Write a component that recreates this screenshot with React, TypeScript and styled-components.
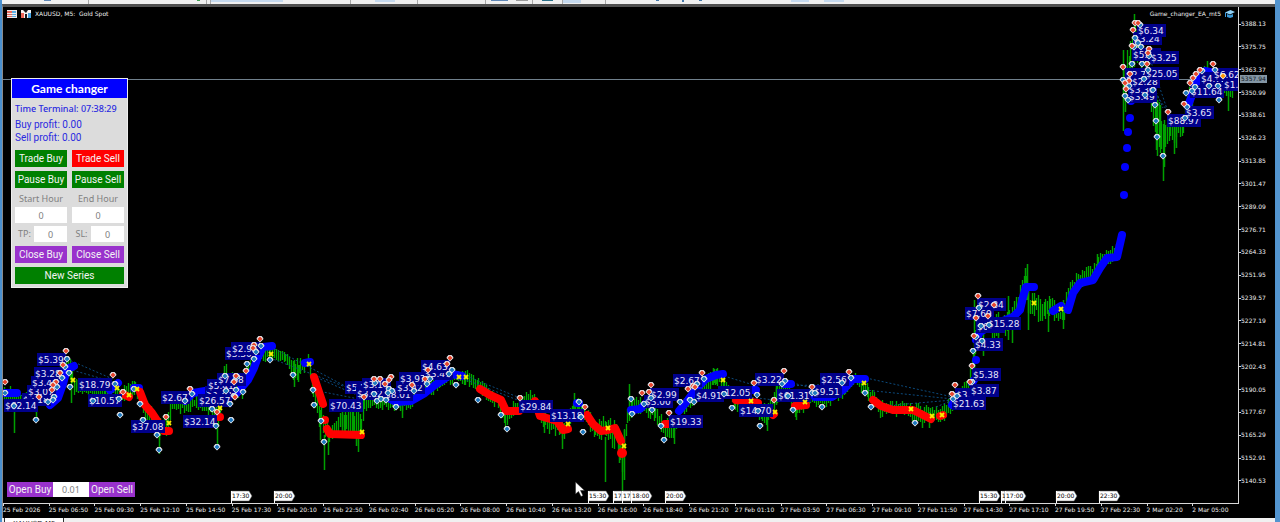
import React from "react";
import styled, { createGlobalStyle } from "styled-components";

const GlobalStyle = createGlobalStyle`
  * { box-sizing: border-box; }
  body { margin: 0; background: #f0f0f0; }
`;

const chartFont = `"DejaVu Sans", sans-serif`;
const labelFont = `"Noto Sans", sans-serif`;
const titleFont = `Lato, "Noto Sans", sans-serif`;
const controlFont = `Roboto, "Liberation Sans", sans-serif`;

const Window = styled.div`
  height: 100vh;
  overflow: hidden;
  display: flex;
  flex-direction: column;
  border-left: 2px solid #4a90cf;
  border-right: 5px solid #5294cf;
  font-family: ${chartFont};
`;

const Toolbar = styled.header`
  height: 4px;
  flex: none;
  overflow: hidden;
  background: #f0f0f0;
  svg { display: block; }
`;

const ChartFrame = styled.main`
  flex: none;
  display: grid;
  grid-template-columns: minmax(0, 1fr) 37px;
  background: #000;
  border-top: 3px solid #505050;
  border-left: 1px solid #8a8a8a;
`;

const Plot = styled.section`
  position: relative;
  border-bottom: 1px solid #d8d8d8;
`;

const ChartSvg = styled.svg`
  display: block;
  width: 100%;
  height: auto;
`;

const Caption = styled.div`
  position: absolute;
  top: 3px;
  left: 4px;
  right: 3px;
  display: flex;
  justify-content: space-between;
  font-size: 6px;
  line-height: 8px;
  color: #f0f0f0;
`;

const CaptionPart = styled.span`
  display: flex;
  align-items: center;
  gap: 4px;
  white-space: pre;
`;

const PriceAxis = styled.ul`
  position: relative;
  margin: 0;
  padding: 13px 0 19px;
  list-style: none;
  display: flex;
  flex-direction: column;
  justify-content: space-between;
  border-left: 1px solid #d8d8d8;
  font-size: 6px;
  line-height: 8px;
  color: #f0f0f0;
`;

const Price = styled.li`
  display: flex;
  align-items: center;
  &::before {
    content: "";
    width: 2px;
    height: 1px;
    background: #d8d8d8;
  }
`;

const CurrentPrice = styled.li`
  position: absolute;
  top: 68px;
  left: 1px;
  padding: 0 1px;
  background: #8496a4;
  color: #10181e;
`;

const TimeAxis = styled.ul`
  margin: 0;
  padding: 0;
  height: 14px;
  list-style: none;
  display: grid;
  grid-template-columns: repeat(27, minmax(0, 1fr));
  font-size: 6px;
  line-height: 8px;
  color: #f0f0f0;
`;

const TimeMark = styled.li`
  white-space: nowrap;
  &::before {
    content: "";
    display: block;
    width: 1px;
    height: 2px;
    background: #d8d8d8;
  }
`;

const Panel = styled.form`
  position: absolute;
  left: 8px;
  top: 71px;
  width: 117px;
  background: #dcdcdc;
  border: 1px solid #eeeeee;
`;

const PanelTitle = styled.h1`
  margin: 0;
  background: #0000ff;
  color: #fff;
  font: 700 12px/19px ${titleFont};
  text-align: center;
`;

const PanelBody = styled.div`
  padding: 4px 3px 3px;
  display: flex;
  flex-direction: column;
  gap: 4px;
`;

const Info = styled.div`
  padding-bottom: 2px;
  color: #2a2ae0;
  font: 10px/13px ${controlFont};
`;

const Clock = styled.div`
  margin-bottom: 2px;
  font: 500 9px/14px ${labelFont};
  white-space: nowrap;
`;

const Pair = styled.div`
  display: grid;
  grid-template-columns: 1fr 1fr;
  gap: 5px;
`;

const colours = { green: "#008000", red: "#ff0000", purple: "#9932cc" };

const ActionButton = styled.button<{ $tone: keyof typeof colours; $flat?: boolean }>`
  height: ${(p) => (p.$flat ? 15 : 17)}px;
  padding: 0;
  border: 0;
  background: ${(p) => colours[p.$tone]};
  color: #f4f4f4;
  font: 10px/15px ${controlFont};
  white-space: nowrap;
`;

const Field = styled.label<{ $inline?: boolean }>`
  display: flex;
  flex-direction: ${(p) => (p.$inline ? "row" : "column")};
  align-items: ${(p) => (p.$inline ? "center" : "stretch")};
  gap: ${(p) => (p.$inline ? 0 : 1)}px;
  color: #808080;
  font: 9px/14px ${labelFont};
  text-align: center;
  > span { flex: 1; }
`;

const HourFields = styled(Pair)`
  margin-bottom: -1px;
`;

const NumberBox = styled.input<{ $width: string; $height?: number }>`
  width: ${(p) => p.$width};
  height: ${(p) => p.$height ?? 16}px;
  padding: 0;
  border: 0;
  background: #fff;
  color: #808080;
  font: 9px/12px ${labelFont};
  text-align: center;
`;

const OrderBar = styled.form`
  position: absolute;
  left: 4px;
  bottom: 6px;
  display: grid;
  grid-template-columns: 46px 36px 46px;
`;

const TabStrip = styled.nav`
  flex: 1;
  padding-left: 2px;
  background: #f0f0f0;
  line-height: 0;
`;

const Tab = styled.a`
  display: inline-block;
  padding: 2px 8px 1px;
  border: 1px solid #303030;
  border-top: 0;
  background: #fff;
  color: #222;
  font-size: 7px;
  line-height: 8px;
  text-decoration: none;
`;

/* ---- chart data ---- */

type Pt = [number, number];
type Range = [number, number, number];

const segments: Range[][] = [
  [
    [4, 388, 398], [14, 390, 412], [30, 392, 404], [44, 388, 404], [60, 364, 384], [70, 354, 378],
    [74, 380, 392], [84, 384, 394], [105, 388, 396], [115, 382, 396], [122, 390, 400], [135, 380, 392],
    [143, 398, 415], [160, 420, 442], [168, 410, 430], [172, 398, 412], [190, 396, 410], [200, 398, 408],
    [218, 402, 425], [226, 366, 396], [240, 378, 402], [255, 350, 364], [270, 346, 358], [285, 354, 360],
    [293, 362, 378], [300, 360, 378], [308, 356, 366], [313, 375, 400], [323, 405, 445], [330, 422, 442],
    [340, 415, 432], [350, 412, 432], [361, 412, 436], [364, 396, 410], [380, 392, 406], [400, 398, 410],
    [410, 396, 408], [425, 380, 396], [440, 374, 388], [450, 368, 382], [465, 372, 382], [478, 380, 390],
    [490, 390, 402], [498, 392, 408], [505, 410, 426], [520, 398, 410], [530, 390, 400], [535, 396, 412],
    [545, 412, 428], [560, 420, 438], [568, 418, 434], [573, 400, 416], [582, 402, 418], [595, 420, 436],
    [606, 418, 440], [616, 420, 448], [622, 440, 470], [627, 410, 430], [632, 400, 412], [640, 398, 412],
    [655, 405, 420], [665, 420, 438], [674, 418, 435], [680, 405, 415], [700, 382, 400], [715, 370, 384],
    [724, 376, 388], [735, 395, 410], [755, 400, 412], [762, 406, 425], [772, 400, 418], [777, 386, 402],
    [785, 378, 388], [795, 402, 418], [810, 392, 404], [830, 392, 404], [845, 382, 394], [855, 374, 382],
    [868, 386, 400], [880, 402, 416], [900, 402, 414], [920, 406, 422], [940, 408, 422], [952, 398, 410],
    [968, 380, 392], [973, 344, 376], [980, 304, 336], [990, 310, 338], [1005, 308, 334], [1012, 308, 326],
    [1020, 285, 312], [1026, 270, 300], [1030, 290, 320], [1045, 302, 318], [1050, 296, 312],
    [1058, 308, 328], [1064, 302, 322], [1070, 280, 300], [1080, 274, 285], [1096, 262, 280],
    [1100, 252, 266], [1110, 252, 262], [1118, 240, 255], [1122, 218, 236],
  ],
  [
    [1123, 62, 100], [1130, 40, 80], [1135, 22, 60], [1145, 50, 80], [1155, 90, 135], [1163, 118, 158],
    [1170, 124, 142], [1183, 118, 136], [1190, 84, 108], [1205, 66, 80], [1220, 78, 92], [1234, 84, 98],
  ],
];

const spikes: Range[] = [
  [14, 392, 433], [36, 405, 420], [71, 370, 403], [76, 380, 392], [159, 436, 454], [217, 424, 448],
  [224, 366, 390], [294, 360, 387], [298, 365, 382], [324, 435, 470], [328, 425, 455], [320, 410, 440],
  [342, 408, 434], [345, 400, 434], [353, 410, 434], [358, 432, 452], [356, 430, 446], [402, 398, 418],
  [382, 395, 410], [562, 425, 449], [544, 410, 433], [574, 393, 412], [578, 398, 418], [605, 437, 482],
  [622, 440, 492], [619, 436, 463], [624, 430, 480], [629, 384, 416], [674, 418, 444], [767, 405, 431],
  [776, 385, 405], [796, 405, 420], [713, 368, 385], [716, 369, 384], [922, 412, 428], [929, 412, 428],
  [974, 300, 370], [983, 320, 356], [998, 320, 338], [1008, 296, 340], [1012, 320, 343], [1027, 264, 300],
  [1025, 268, 290], [1028, 288, 330], [1048, 310, 332], [1063, 300, 329], [1097, 254, 275],
  [1123, 50, 131], [1134, 14, 60], [1125, 70, 112], [1156, 95, 150], [1157, 100, 156], [1160, 105, 153],
  [1163, 157, 181], [1164, 120, 167], [1174, 125, 154], [1176, 125, 148], [1207, 61, 75], [1228, 92, 111],
];

/* One thin bar every two pixels, with a repeatable wobble round the range. */
const candles: Range[] = segments.flatMap((seg) => {
  const out: Range[] = [];
  for (let i = 0; i < seg.length - 1; i++) {
    const [x0, t0, b0] = seg[i];
    const [x1, t1, b1] = seg[i + 1];
    for (let x = x0; x < x1; x += 2) {
      const k = (x - x0) / (x1 - x0);
      const n = Math.abs(Math.sin(x * 12.9898) * 43758.5453) % 1;
      const m = Math.abs(Math.sin(x * 78.233) * 12543.123) % 1;
      const top = t0 + (t1 - t0) * k;
      const bottom = b0 + (b1 - b0) * k;
      const h = bottom - top;
      out.push([x, Math.round(top - 3 + h * 0.5 * n), Math.round(bottom + 3 - h * 0.5 * m)]);
    }
  }
  return out;
});

const upTrend: Pt[][] = [
  [[5, 393], [17, 393]],
  [[50, 405], [58, 398], [63, 384], [67, 369], [74, 366]],
  [[110, 390], [118, 383]],
  [[134, 388], [139, 388]],
  [[185, 401], [193, 393], [205, 391]],
  [[236, 394], [248, 380], [254, 368], [258, 357], [263, 347], [272, 346]],
  [[305, 363], [310, 362]],
  [[366, 396], [378, 393], [396, 402], [411, 401], [425, 393], [435, 385], [441, 381], [452, 374], [462, 376]],
  [[577, 403], [579, 403]],
  [[631, 410], [640, 409], [646, 403], [656, 397]],
  [[679, 411], [688, 400], [697, 388], [706, 379], [716, 375], [723, 374]],
  [[750, 390], [756, 390]],
  [[784, 384], [791, 384]],
  [[815, 397], [832, 397], [843, 390], [853, 379], [865, 379]],
  [[952, 405], [958, 396]],
  [[972, 383], [974, 380]],
  [[976, 360], [976, 360]],
  [[976, 340], [980, 332], [990, 326], [1013, 317], [1020, 310], [1023, 297], [1026, 287], [1034, 287]],
  [[1053, 311], [1061, 306]],
  [[1068, 310], [1073, 293], [1080, 283], [1093, 280], [1100, 268], [1107, 258], [1117, 257], [1122, 235]],
  [[1188, 106], [1192, 95], [1197, 82], [1205, 71], [1215, 73]],
];

const downTrend: Pt[][] = [
  [[123, 394], [129, 397]],
  [[140, 392], [145, 405], [152, 413], [158, 422]],
  [[164, 431], [169, 431]],
  [[219, 417], [220, 417]],
  [[314, 377], [318, 389], [323, 404]],
  [[325, 420], [325, 420]],
  [[327, 429], [330, 434], [361, 435]],
  [[480, 389], [490, 395], [501, 400], [506, 411], [519, 411]],
  [[535, 401], [540, 416], [557, 421], [563, 430], [568, 429]],
  [[587, 415], [593, 424], [601, 431], [608, 430], [615, 428], [621, 441]],
  [[665, 424], [669, 424]],
  [[736, 400], [758, 403]],
  [[773, 415], [774, 414]],
  [[795, 406], [806, 405]],
  [[873, 400], [881, 406], [893, 410], [913, 410], [919, 413], [931, 419]],
  [[940, 416], [943, 415]],
];

const dots: Pt[] = [[1124, 195], [1125, 167], [1127, 148], [1128, 132], [1130, 118], [1131, 101]];

const tradeLines: [number, number, number, number][] = [
  [67, 359, 115, 380], [65, 368, 117, 383], [5, 393, 50, 400], [271, 347, 364, 396], [270, 358, 364, 394],
  [313, 376, 364, 398], [313, 390, 364, 400], [452, 370, 520, 398], [459, 377, 520, 401],
  [724, 376, 757, 386], [724, 394, 774, 400], [785, 381, 812, 388], [785, 386, 842, 384],
  [866, 378, 953, 397], [865, 390, 953, 399], [871, 407, 953, 400], [936, 407, 953, 400],
  [1149, 56, 1168, 112], [1153, 90, 1168, 112], [1147, 70, 1163, 108],
];

/* Later profit tags lie over earlier ones. */
const profits: [string, number, number][] = [
  ["$3.18", 24, 400], ["$62.14", 6, 406], ["$3.07", 29, 392], ["$3.46", 33, 383], ["$3.28", 36, 374],
  ["$5.39", 39, 360], ["$10.57", 90, 401], ["$18.79", 80, 385], ["$37.08", 133, 427], ["$2.67", 163, 398],
  ["$32.14", 185, 422], ["$3.25", 207, 393], ["$5.41", 209, 386], ["$26.57", 200, 401], ["$7.68", 219, 380],
  ["$3.30", 227, 354], ["$2.95", 233, 349],
  ["$5.21", 347, 388], ["$3.12", 358, 394], ["$8.01", 386, 395], ["$3.14", 364, 385], ["$70.43", 331, 406],
  ["$3.42", 398, 388], ["$3.97", 401, 379], ["$3.47", 426, 374], ["$4.63", 423, 367],
  ["$29.84", 521, 407], ["$13.18", 552, 416], ["$3.00", 646, 402], ["$2.99", 652, 395],
  ["$2.67", 675, 381], ["$12.05", 720, 393], ["$4.91", 697, 396], ["$19.33", 671, 422],
  ["$14.70", 741, 411], ["$3.22", 757, 380], ["$61.31", 779, 396], ["$9.51", 815, 392], ["$2.56", 822, 380],
  ["$2.84", 979, 305], ["$7.69", 967, 314], ["$6.50", 978, 327], ["$15.28", 989, 324], ["$4.33", 976, 345],
  ["$5.38", 974, 375], ["$3.11", 957, 395], ["$3.87", 972, 391], ["$21.63", 954, 404],
  ["$3.24", 1135, 39], ["$6.34", 1139, 31], ["$5.10", 1134, 55], ["$3.25", 1152, 58],
  ["$3.49", 1130, 97], ["$3.30", 1130, 90], ["$2.75", 1127, 75], ["$2.28", 1133, 82], ["$25.05", 1147, 74],
  ["$88.97", 1169, 121], ["$3.65", 1187, 113], ["$11.64", 1192, 92], ["$4.72", 1202, 79],
  ["$6.62", 1215, 75], ["$1.20", 1225, 85],
];

const sells: Pt[] = [
  [66, 351], [5, 382], [63, 365], [60, 373], [56, 382], [53, 385], [52, 390], [39, 397], [113, 375],
  [123, 392], [166, 417], [190, 389], [217, 412], [236, 376], [234, 382], [235, 397], [260, 339],
  [254, 345], [253, 348], [246, 371], [374, 379], [380, 379], [391, 377], [389, 380], [385, 384],
  [364, 397], [412, 385], [428, 370], [425, 379], [450, 358], [447, 364], [520, 398], [585, 407],
  [642, 393], [651, 385], [649, 392], [669, 413], [702, 373], [688, 389], [693, 386], [695, 387],
  [754, 383], [784, 371], [774, 400], [812, 387], [849, 372], [978, 296], [994, 305], [988, 316],
  [976, 318], [974, 336], [972, 366], [970, 382], [955, 385], [952, 394], [1135, 23], [1138, 23],
  [1133, 30], [1132, 46], [1149, 49], [1148, 53], [1147, 64], [1123, 67], [1130, 74], [1129, 81],
  [1125, 83], [1126, 89], [1168, 112], [1213, 64], [1200, 70], [1196, 74], [1193, 78], [1190, 83],
  [1184, 104],
];

const buys: Pt[] = [
  [67, 359], [65, 367], [69, 373], [62, 378], [70, 387], [57, 387], [54, 397], [53, 400], [48, 402],
  [36, 420], [14, 406], [5, 393], [115, 384], [119, 399], [120, 415], [93, 401], [134, 389], [140, 404],
  [143, 420], [157, 435], [159, 450], [185, 401], [192, 394], [212, 409], [216, 426], [217, 447],
  [225, 376], [226, 391], [237, 377], [231, 420], [230, 404], [261, 346], [256, 352], [254, 359],
  [247, 364], [270, 360], [243, 392], [236, 390], [234, 396], [293, 375], [313, 390], [314, 405],
  [321, 421], [324, 442], [375, 383], [374, 394], [377, 401], [381, 399], [386, 400], [389, 389],
  [392, 391], [388, 393], [396, 407], [414, 391], [427, 384], [430, 379], [452, 370], [449, 374],
  [456, 385], [478, 400], [501, 415], [507, 429], [579, 402], [583, 432], [581, 417], [631, 399],
  [632, 414], [644, 404], [651, 398], [652, 410], [661, 426], [664, 440], [680, 402], [704, 379],
  [697, 384], [690, 400], [694, 402], [724, 394], [732, 408], [757, 395], [758, 411], [760, 426],
  [785, 381], [782, 384], [788, 396], [793, 410], [812, 393], [815, 393], [822, 407], [842, 383],
  [851, 378], [865, 393], [871, 407], [915, 423], [953, 399], [957, 396], [972, 382], [973, 351],
  [976, 337], [982, 341], [979, 308], [981, 326], [989, 325], [1140, 25], [1135, 38], [1138, 43],
  [1134, 47], [1141, 47], [1132, 64], [1142, 64], [1149, 56], [1148, 70], [1144, 79], [1153, 90],
  [1145, 95], [1155, 105], [1156, 121], [1157, 137], [1163, 156], [1123, 80], [1125, 96], [1129, 86],
  [1128, 100], [1186, 93], [1187, 107], [1185, 118], [1192, 91], [1195, 87], [1202, 71], [1215, 70],
  [1209, 86], [1218, 86], [1219, 100],
];

const exits: Pt[] = [
  [73, 380], [117, 388], [129, 395], [137, 389], [169, 423], [220, 408], [271, 354], [309, 364],
  [362, 432], [459, 377], [466, 377], [568, 424], [608, 428], [624, 446], [723, 380], [751, 401],
  [775, 412], [805, 402], [864, 383], [911, 409], [932, 416], [942, 415], [1034, 303], [1061, 309],
];

const flags: [string, number][] = [
  ["17:30", 231], ["20:00", 274], ["15:30", 588], ["17:00", 613], ["17:30", 622], ["18:00", 631],
  ["20:00", 665], ["15:30", 979], ["16:00", 1001], ["17:00", 1005], ["20:00", 1056], ["22:30", 1099],
];

const prices = [
  "5388.13", "5375.75", "5363.37", "5350.99", "5338.61", "5326.23", "5313.85", "5301.47", "5289.09",
  "5276.71", "5264.33", "5251.95", "5239.57", "5227.19", "5214.81", "5202.43", "5190.05", "5177.67",
  "5165.29", "5152.91", "5140.53",
];

const times = [
  "25 Feb 2026", "25 Feb 06:50", "25 Feb 09:30", "25 Feb 12:10", "25 Feb 14:50", "25 Feb 17:30",
  "25 Feb 20:10", "25 Feb 22:50", "26 Feb 02:40", "26 Feb 05:20", "26 Feb 08:00", "26 Feb 10:40",
  "26 Feb 13:20", "26 Feb 16:00", "26 Feb 18:40", "26 Feb 21:20", "27 Feb 01:10", "27 Feb 03:50",
  "27 Feb 06:30", "27 Feb 09:10", "27 Feb 11:50", "27 Feb 14:30", "27 Feb 17:10", "27 Feb 19:50",
  "27 Feb 22:30", "2 Mar 02:20", "2 Mar 05:00",
];

const toPoints = (pts: Pt[]) => pts.map((p) => p.join(",")).join(" ");
const barPath = (bars: Range[]) => bars.map(([x, a, b]) => `M${x + 0.5} ${a}V${b}`).join("");

function Marker({ at, fill }: { at: Pt; fill: string }) {
  const [x, y] = at;
  return (
    <g>
      <path d={`M${x - 1.5} ${y - 3}h3l2 2.200l-3.500 3.800l-3.500-3.800z`} fill="#e6e6ea" />
      <path d={`M${x - 3.5} ${y}l1.500-1h4l1.500 1l-3.500 3.500z`} fill="#e6e6ea" />
      <path d={`M${x} ${y - 2.5}l2.500 2.500l-2.500 2.500l-2.500-2.500z`} fill={fill} />
    </g>
  );
}

function PriceChart() {
  return (
    <ChartSvg viewBox="3 7 1235 496" role="img" aria-label="XAUUSD five minute price chart">
      <path d="M3 79.5H1238" stroke="#70808c" />
      <path d={barPath(candles)} stroke="#00a800" strokeWidth="1.300" />
      <path d={barPath(spikes)} stroke="#00a000" strokeWidth="1.500" />
      {tradeLines.map(([x1, y1, x2, y2], i) => (
        <line key={i} x1={x1} y1={y1} x2={x2} y2={y2} stroke="#0c4a7c" strokeDasharray="2 2" />
      ))}
      <g fill="none" strokeWidth="8" strokeLinecap="round" strokeLinejoin="round">
        {upTrend.map((p, i) => <polyline key={i} points={toPoints(p)} stroke="#0000ff" />)}
        {downTrend.map((p, i) => <polyline key={i} points={toPoints(p)} stroke="#ff0000" />)}
      </g>
      {dots.map(([x, y]) => <circle key={y} cx={x} cy={y} r="4" fill="#0000ff" />)}
      <circle cx="622" cy="453" r="5" fill="#ff0000" />
      <g fontFamily={chartFont} fontSize="9">
        {profits.map(([text, x, y], i) => (
          <g key={i}>
            <rect x={x - 2} y={y - 7} width={text.length === 6 ? 34 : 29} height="13" fill="#00008b" />
            <text x={x - 1} y={y + 3} fill="#e6e6fa">{text}</text>
          </g>
        ))}
      </g>
      {buys.map((p, i) => <Marker key={i} at={p} fill="#1c78c0" />)}
      {sells.map((p, i) => <Marker key={i} at={p} fill="#e8452c" />)}
      <Marker at={[1223, 76]} fill="#ff9800" />
      <path
        d={exits.map(([x, y]) => `M${x - 2} ${y - 2}l4 4m0-4l-4 4`).join("")}
        stroke="#f5f000" strokeWidth="1.800"
      />
      <g fontFamily={chartFont} fontSize="6">
        {flags.map(([text, x]) => (
          <g key={x}>
            <path d={`M${x} 491h18l3 5l-3 5h-18z`} fill="#fff" stroke="#555" strokeWidth="0.5" />
            <path d={`M${x + 0.5} 491v12`} stroke="#fff" />
            <text x={x + 1} y="498" fill="#000">{text}</text>
          </g>
        ))}
      </g>
      <path d="M575.5 482v12l3-2.500l2.500 5l2-1l-2.500-5h4z" fill="#fff" stroke="#222" strokeWidth="0.5" />
    </ChartSvg>
  );
}

function ToolbarIcons() {
  return (
    <svg width="100%" height="4" aria-hidden="true">
      <path d="M86.500 0v4M204.500 0v4M208.500 0v4M348.500 0v4M415.500 0v4M483.500 0v4M530.500 0v4M560.500 0v4M603.500 0v4" stroke="#a8a8a8" />
      <path d="M209 0h72v2h-72zM373 0h20v2h-20zM561 0h18v3h-18zM789 0h18v2h-18zM822 0h20v2h-20z" fill="#c5d9ee" />
      <path d="M42 0h7v1h-7zM489 0h17v1h-17z" fill="#5f86b5" />
      <path d="M514 0h12v1h-12z" fill="#9a9a9a" />
      <path d="M540 0h11v1h-11z" fill="#2a7088" />
      <path d="M195 0h3v1h-3z" fill="#3fa050" />
      <path d="M654 0h3v1h-3zM680 0h2v2h-2zM697 0h3v1h-3z" fill="#4477a8" />
    </svg>
  );
}

export default function App() {
  return (
    <Window>
      <GlobalStyle />
      <Toolbar><ToolbarIcons /></Toolbar>
      <ChartFrame>
        <Plot>
          <PriceChart />
          <Caption>
            <CaptionPart>
              <svg width="10" height="8" viewBox="0 0 10 8" aria-hidden="true">
                <path d="M0 0h10v8h-10z" fill="#f1e9e9" />
                <path d="M0 1h5v2h-5zM0 4h5v1h-5zM0 6h5v1h-5z" fill="#ea6a5c" />
                <path d="M5 1h4v2h-4zM5 4h4v1h-4zM5 6h4v1h-4z" fill="#58aee6" />
              </svg>
              <svg width="10" height="8" viewBox="0 0 10 8" aria-hidden="true">
                <path d="M0 0h10v8h-10z" fill="#f6f2f2" />
                <path d="M0 3h3v5h-3z" fill="#ee6557" />
                <path d="M2 0h5l-2 3zM4 4h2v4h-2z" fill="#17171c" />
                <path d="M7 3h3v5h-3z" fill="#45a4e2" />
              </svg>
              <span>XAUUSD, M5:  Gold Spot</span>
            </CaptionPart>
            <CaptionPart>
              <span>Game_changer_EA_mt5</span>
              <svg width="10" height="8" viewBox="0 0 10 8" aria-hidden="true">
                <path d="M0 2.500l5.500-2.500l4.500 2l-5 2.500z" fill="#8fd0f5" />
                <path d="M2 4l3 1.300l3-1.300v3l-3 1l-3-1z" fill="#3b9ada" />
                <path d="M0 2.500h1v4.500h-1z" fill="#3b9ada" />
              </svg>
            </CaptionPart>
          </Caption>
          <Panel>
            <PanelTitle>Game changer</PanelTitle>
            <PanelBody>
              <Info>
                <Clock>Time Terminal: 07:38:29</Clock>
                <div>Buy profit: 0.00</div>
                <div>Sell profit: 0.00</div>
              </Info>
              <Pair>
                <ActionButton type="button" $tone="green">Trade Buy</ActionButton>
                <ActionButton type="button" $tone="red">Trade Sell</ActionButton>
              </Pair>
              <Pair>
                <ActionButton type="button" $tone="green">Pause Buy</ActionButton>
                <ActionButton type="button" $tone="green">Pause Sell</ActionButton>
              </Pair>
              <HourFields>
                <Field><span>Start Hour</span><NumberBox $width="100%" defaultValue="0" /></Field>
                <Field><span>End Hour</span><NumberBox $width="100%" defaultValue="0" /></Field>
              </HourFields>
              <Pair>
                <Field $inline><span>TP:</span><NumberBox $width="33px" defaultValue="0" /></Field>
                <Field $inline><span>SL:</span><NumberBox $width="33px" defaultValue="0" /></Field>
              </Pair>
              <Pair>
                <ActionButton type="button" $tone="purple">Close Buy</ActionButton>
                <ActionButton type="button" $tone="purple">Close Sell</ActionButton>
              </Pair>
              <ActionButton type="button" $tone="green">New Series</ActionButton>
            </PanelBody>
          </Panel>
          <OrderBar>
            <ActionButton type="button" $tone="purple" $flat>Open Buy</ActionButton>
            <NumberBox aria-label="Lot size" $width="100%" $height={15} defaultValue="0.01" />
            <ActionButton type="button" $tone="purple" $flat>Open Sell</ActionButton>
          </OrderBar>
        </Plot>
        <PriceAxis>
          {prices.map((p) => <Price key={p}>{p}</Price>)}
          <CurrentPrice>5357.94</CurrentPrice>
        </PriceAxis>
        <TimeAxis>
          {times.map((t) => <TimeMark key={t}>{t}</TimeMark>)}
        </TimeAxis>
      </ChartFrame>
      <TabStrip><Tab href="#chart">XAUUSD,M5</Tab></TabStrip>
    </Window>
  );
}
